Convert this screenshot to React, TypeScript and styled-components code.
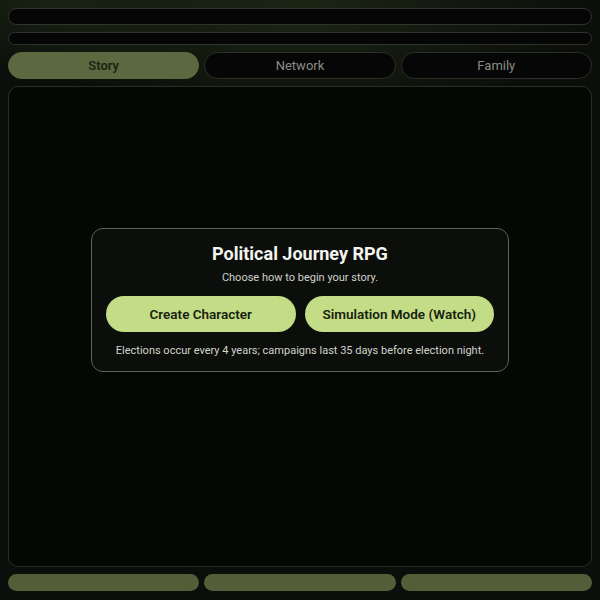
import styled, { createGlobalStyle } from "styled-components"

const GlobalStyle = createGlobalStyle`
  html, body {
    margin: 0;
    padding: 0;
    height: 100%;
  }
  body {
    background:
      radial-gradient(ellipse 420px 160px at 300px 10px, rgba(60, 80, 40, 0.35), transparent 70%),
      radial-gradient(ellipse 300px 120px at 40px 0px, rgba(50, 70, 35, 0.3), transparent 70%),
      #0b0e0a;
    font-family: Roboto, "Noto Sans", sans-serif;
    color: #f2f2ee;
  }
  #root {
    height: 100%;
  }
`

const Page = styled.div`
  box-sizing: border-box;
  height: 600px;
  padding: 8px 8px 9px;
  display: flex;
  flex-direction: column;
  gap: 7px;
`

const Bar = styled.div<{ $height: number }>`
  height: ${(p) => p.$height}px;
  border-radius: 999px;
  background: #050605;
  border: 1px solid #2f352b;
  box-sizing: border-box;
  flex-shrink: 0;
`

const TabRow = styled.div`
  display: grid;
  grid-template-columns: 1fr 1fr 1fr;
  gap: 5px;
  height: 27px;
  flex-shrink: 0;
`

const Tab = styled.button<{ $active?: boolean }>`
  border-radius: 999px;
  border: 1px solid ${(p) => (p.$active ? "#5c6a40" : "#2c3128")};
  background: ${(p) => (p.$active ? "#5b6840" : "#050605")};
  color: ${(p) => (p.$active ? "#1c2414" : "#8a8d86")};
  font-family: Roboto, "Noto Sans", sans-serif;
  font-size: 13px;
  font-weight: ${(p) => (p.$active ? 600 : 400)};
  padding: 0;
`

const MainPanel = styled.div`
  flex: 1;
  border-radius: 10px;
  border: 1px solid #2a2e26;
  background: #050705;
`

const BottomRow = styled.div`
  display: grid;
  grid-template-columns: 1fr 1fr 1fr;
  gap: 5px;
  height: 17px;
  flex-shrink: 0;
`

const BottomButton = styled.div`
  border-radius: 999px;
  background: #535e39;
`

const Modal = styled.div`
  position: fixed;
  left: 91px;
  top: 228px;
  width: 418px;
  box-sizing: border-box;
  border: 1px solid #5d6452;
  border-radius: 12px;
  background: #0b0e0a;
  padding: 14px 14px 13px;
  display: flex;
  flex-direction: column;
  align-items: center;
`

const Title = styled.h2`
  margin: 0;
  font-size: 18px;
  font-weight: 700;
  line-height: 22px;
  color: #f4f4f0;
`

const Subtitle = styled.p`
  margin: 6px 0 0;
  font-size: 11px;
  line-height: 14px;
  color: #cfd1ca;
`

const Actions = styled.div`
  display: grid;
  grid-template-columns: 1fr 1fr;
  gap: 9px;
  width: 100%;
  margin-top: 11px;
`

const ActionButton = styled.button`
  height: 36px;
  border-radius: 999px;
  border: none;
  background: #c3dc86;
  color: #18200f;
  font-family: Roboto, "Noto Sans", sans-serif;
  font-size: 13.5px;
  font-weight: 600;
`

const Note = styled.p`
  margin: 12px 0 0;
  font-size: 11px;
  line-height: 14px;
  color: #d2d4cc;
`

export default function App() {
  return (
    <>
      <GlobalStyle />
      <Page>
        <Bar $height={17} />
        <Bar $height={13} />
        <TabRow>
          <Tab $active>Story</Tab>
          <Tab>Network</Tab>
          <Tab>Family</Tab>
        </TabRow>
        <MainPanel />
        <BottomRow>
          <BottomButton />
          <BottomButton />
          <BottomButton />
        </BottomRow>
      </Page>
      <Modal>
        <Title>Political Journey RPG</Title>
        <Subtitle>Choose how to begin your story.</Subtitle>
        <Actions>
          <ActionButton>Create Character</ActionButton>
          <ActionButton>Simulation Mode (Watch)</ActionButton>
        </Actions>
        <Note>Elections occur every 4 years; campaigns last 35 days before election night.</Note>
      </Modal>
    </>
  )
}
